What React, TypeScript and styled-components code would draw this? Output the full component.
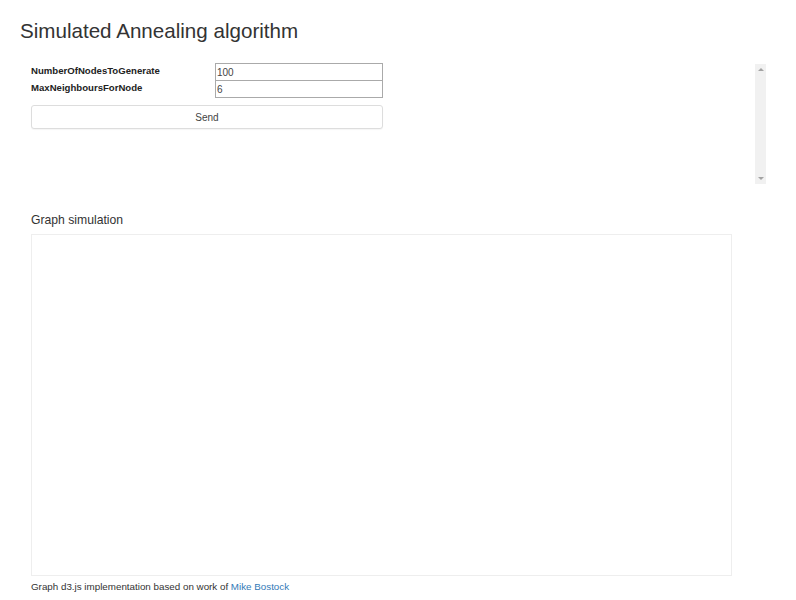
import styled, { createGlobalStyle } from 'styled-components'

const GlobalStyle = createGlobalStyle`
  body {
    margin: 0;
    background: #fff;
    font-family: "Liberation Sans", Arial, sans-serif;
    color: #333;
  }
`

const Page = styled.div`
  padding: 19px 0 0 20px;
  width: 796px;
  box-sizing: border-box;
`

const Title = styled.h1`
  margin: 0 0 20px;
  font-size: 20.6px;
  font-weight: 400;
  line-height: 24px;
  color: #333;
`

const Body = styled.div`
  padding-left: 11px;
`

const TopRow = styled.div`
  display: flex;
  align-items: flex-start;
  width: 735px;
  height: 149px;
`

const Form = styled.form`
  width: 352px;
  display: flex;
  flex-direction: column;
`

const Field = styled.div`
  display: flex;
  align-items: center;
  height: 18px;
  margin-bottom: -1px;
`

const Label = styled.label`
  width: 184px;
  font-size: 9.6px;
  font-weight: 700;
  color: #222;
  margin-top: -3px;
`

const Input = styled.input`
  width: 168px;
  height: 18px;
  box-sizing: border-box;
  border: 1px solid #aaa;
  border-radius: 0;
  padding: 1px 1px;
  font-family: inherit;
  font-size: 10px;
  color: #444;
  outline: none;
`

const SendButton = styled.button`
  margin-top: 8px;
  height: 24px;
  width: 352px;
  background: #fff;
  border: 1px solid #ddd;
  border-radius: 3px;
  font-family: inherit;
  font-size: 10px;
  color: #444;
  box-shadow: 0 1px 1px rgba(0, 0, 0, 0.04);
`

const LogPanel = styled.div`
  flex: 1;
  display: flex;
  justify-content: flex-end;
  height: 120px;
  margin-top: 1px;
`

const ScrollTrack = styled.div`
  width: 11px;
  height: 120px;
  background: #f1f1f1;
  display: flex;
  flex-direction: column;
  justify-content: space-between;
  align-items: center;
  padding: 4px 0;
  box-sizing: border-box;
`

const Arrow = styled.div<{ $down?: boolean }>`
  width: 0;
  height: 0;
  border-left: 3px solid transparent;
  border-right: 3px solid transparent;
  ${(p) => (p.$down ? 'border-top: 3px solid #a3a3a3;' : 'border-bottom: 3px solid #a3a3a3;')}
`

const SectionTitle = styled.h3`
  margin: 0 0 6px;
  font-size: 12.2px;
  font-weight: 400;
  line-height: 16px;
  color: #333;
`

const GraphBox = styled.div`
  width: 701px;
  height: 342px;
  box-sizing: border-box;
  border: 1px solid #eee;
`

const Footer = styled.p`
  margin: 4px 0 0;
  font-size: 9.8px;
  line-height: 14px;
  color: #333;

  a {
    color: #337ab7;
    text-decoration: none;
  }
`

export default function App() {
  return (
    <>
      <GlobalStyle />
      <Page>
        <Title>Simulated Annealing algorithm</Title>
        <Body>
          <TopRow>
            <Form onSubmit={(e) => e.preventDefault()}>
              <Field>
                <Label>NumberOfNodesToGenerate</Label>
                <Input defaultValue="100" />
              </Field>
              <Field>
                <Label>MaxNeighboursForNode</Label>
                <Input defaultValue="6" />
              </Field>
              <SendButton type="submit">Send</SendButton>
            </Form>
            <LogPanel>
              <ScrollTrack>
                <Arrow />
                <Arrow $down />
              </ScrollTrack>
            </LogPanel>
          </TopRow>
          <SectionTitle>Graph simulation</SectionTitle>
          <GraphBox />
          <Footer>
            Graph d3.js implementation based on work of <a href="#">Mike Bostock</a>
          </Footer>
        </Body>
      </Page>
    </>
  )
}
